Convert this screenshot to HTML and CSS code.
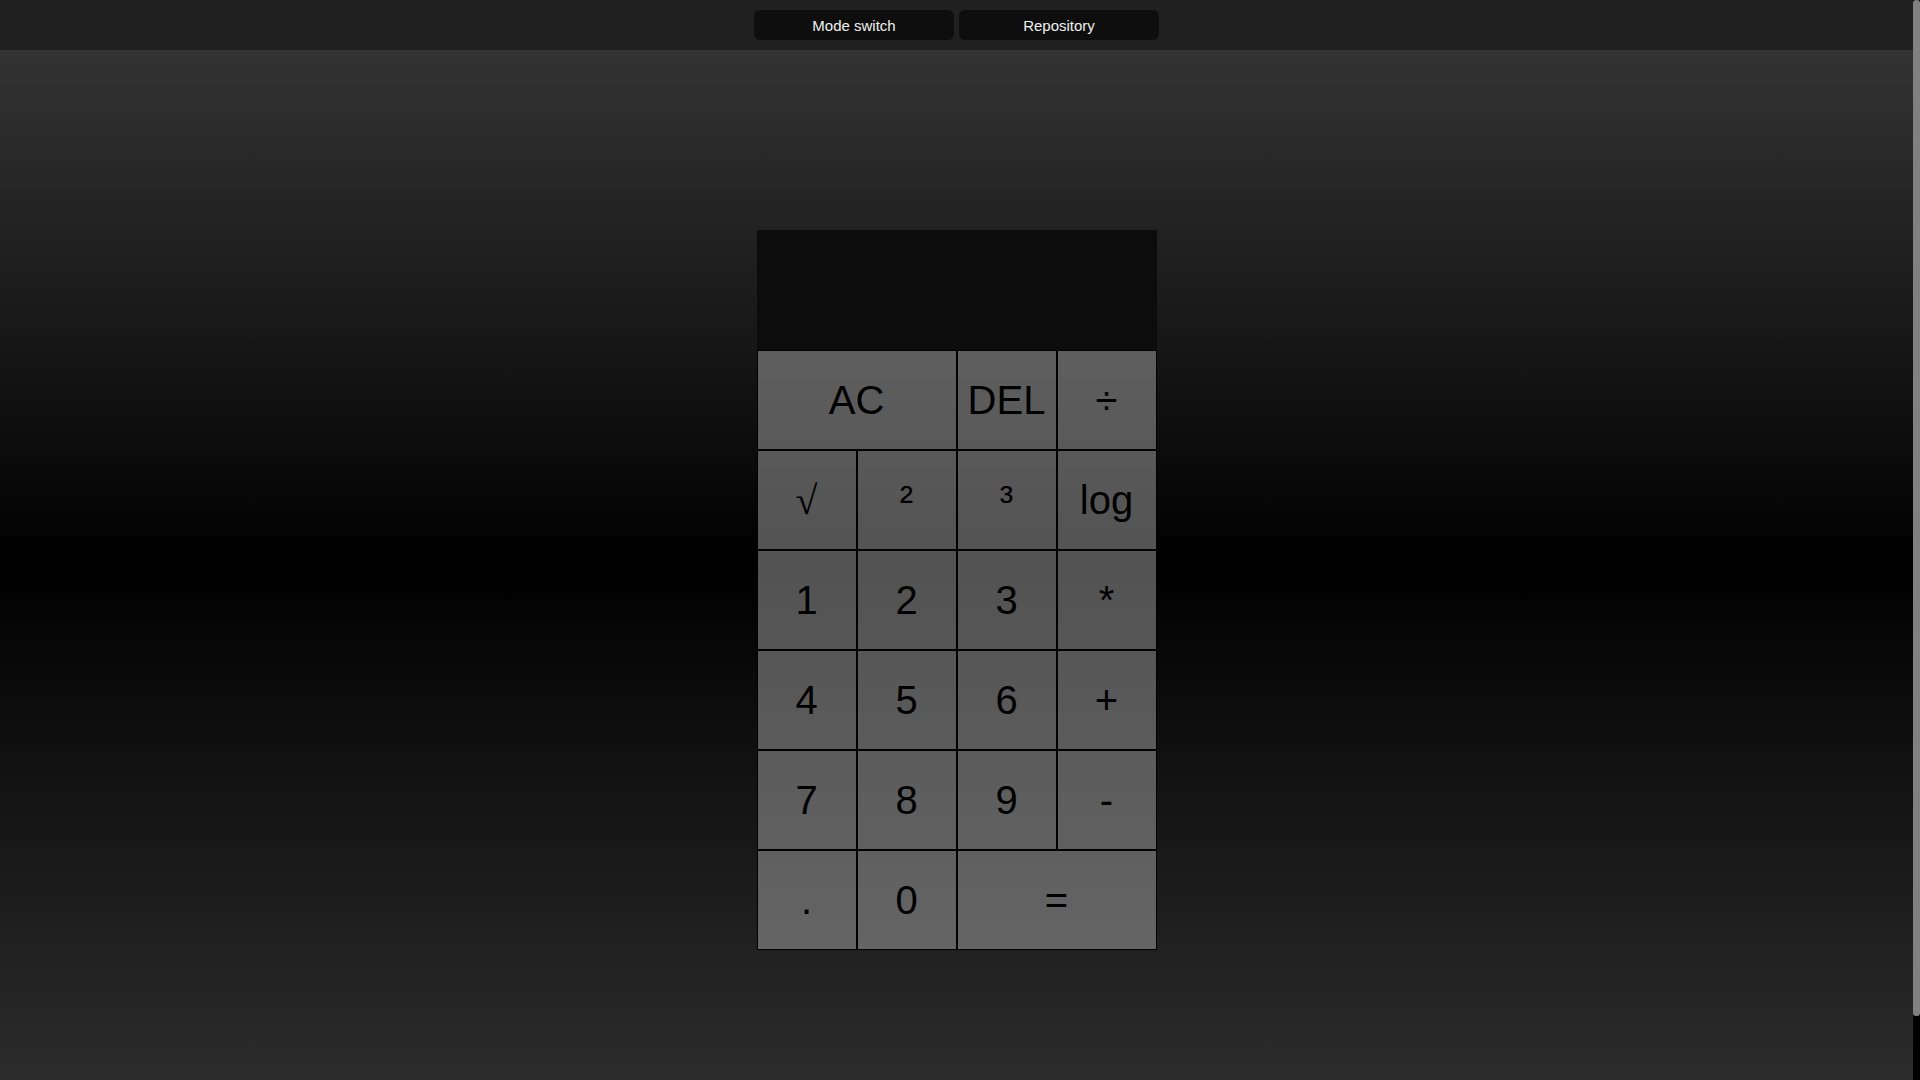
FILE: index.html
```html
<!DOCTYPE html>
<html lang="en">
<head>
<meta charset="utf-8">
<title>Calculator</title>
<link rel="stylesheet" href="styles.css">
</head>
<body>
<div class="page">
  <nav class="topbar">
    <button class="nav-btn">Mode switch</button>
    <button class="nav-btn">Repository</button>
  </nav>
  <main class="stage">
    <div class="calculator">
      <div class="display"></div>
      <div class="keys">
        <button class="key span-two">AC</button>
        <button class="key">DEL</button>
        <button class="key">÷</button>
        <button class="key serif-glyph">√</button>
        <button class="key">²</button>
        <button class="key">³</button>
        <button class="key">log</button>
        <button class="key">1</button>
        <button class="key">2</button>
        <button class="key">3</button>
        <button class="key">*</button>
        <button class="key">4</button>
        <button class="key">5</button>
        <button class="key">6</button>
        <button class="key">+</button>
        <button class="key">7</button>
        <button class="key">8</button>
        <button class="key">9</button>
        <button class="key">-</button>
        <button class="key">.</button>
        <button class="key">0</button>
        <button class="key span-two">=</button>
      </div>
    </div>
  </main>
</div>
<div class="scroll-rail" aria-hidden="true"><div class="scroll-thumb"></div></div>
</body>
</html>
```

FILE: styles.css
```css
* {
  box-sizing: border-box;
}
html {
  background: #000;
}
body {
  margin: 0;
  height: 100vh;
  overflow: hidden;
  display: flex;
  font-family: "Liberation Sans", Arial, sans-serif;
  background: #2c2c2c;
}
.page {
  flex: 1;
  min-width: 0;
  overflow: hidden;
}
.scroll-rail {
  width: 7px;
  flex: none;
  background: #000;
}
.scroll-thumb {
  height: 1016px;
  background: #808080;
  border-radius: 3px;
}
.topbar {
  height: 50px;
  background: #202020;
  display: flex;
  justify-content: center;
  align-items: flex-start;
  gap: 5px;
  padding-top: 10px;
}
.nav-btn {
  width: 200px;
  height: 30px;
  border: none;
  border-radius: 6px;
  background: #0e0e0e;
  color: #f0f0f0;
  font-family: "Liberation Sans", Arial, sans-serif;
  font-size: 15px;
  padding: 0;
}
.stage {
  height: 1098px;
  padding-top: 180px;
  display: flex;
  justify-content: center;
  align-items: flex-start;
  background: linear-gradient(#333333 0px, #1a1a1a 260px, #000000 515px, #101010 700px, #2c2c2c 1030px, #303030 1098px);
}
.calculator {
  width: 400px;
}
.display {
  height: 120px;
  background: #0c0c0c;
}
.keys {
  display: grid;
  grid-template-columns: repeat(4, 100px);
  grid-auto-rows: 100px;
}
.key {
  border: 1px solid #000;
  background: rgba(185, 185, 185, 0.45);
  color: #000;
  font-family: "Liberation Sans", Arial, sans-serif;
  font-size: 40px;
  padding: 0;
  display: flex;
  align-items: center;
  justify-content: center;
}
.serif-glyph {
  font-family: "Liberation Serif", "Times New Roman", serif;
}
.span-two {
  grid-column: span 2;
}
```
